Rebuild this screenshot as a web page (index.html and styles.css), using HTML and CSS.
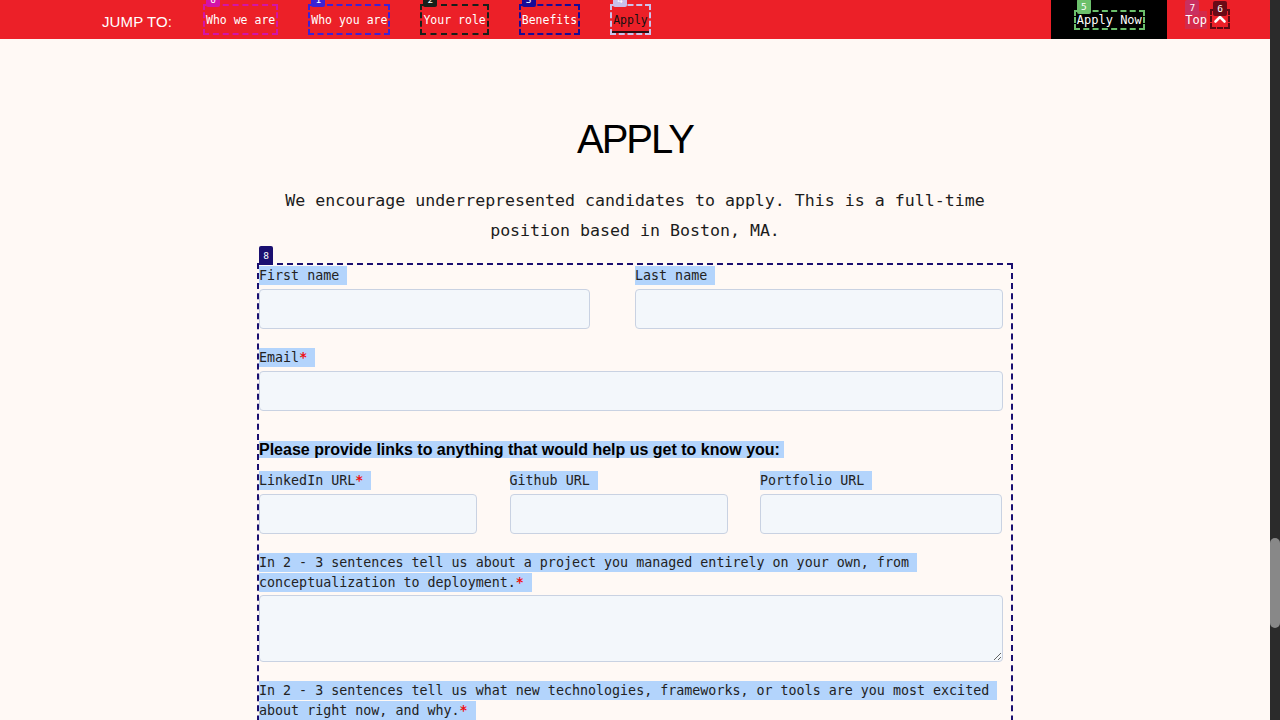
FILE: index.html
```html
<!DOCTYPE html>
<html lang="en">
<head>
<meta charset="utf-8">
<title>Apply</title>
<link rel="stylesheet" href="styles.css">
</head>
<body>
<div class="viewport">
  <div class="page">
    <nav class="topnav">
      <span class="jump">JUMP TO:</span>
      <ul class="links">
        <li class="tag t0"><a class="navlink" href="#who">Who we are</a><span class="badge b0">0</span></li>
        <li class="tag t1"><a class="navlink" href="#you">Who you are</a><span class="badge b1">1</span></li>
        <li class="tag t2"><a class="navlink" href="#role">Your role</a><span class="badge b2">2</span></li>
        <li class="tag t3"><a class="navlink" href="#benefits">Benefits</a><span class="badge b3">3</span></li>
        <li class="tag t4"><a class="navlink active" href="#apply">Apply</a><span class="badge b4">4</span></li>
      </ul>
      <div class="applynow">
        <span class="tag t5"><a class="navlink" href="#apply">Apply Now</a><span class="badge b5 clamp">5</span></span>
      </div>
      <div class="toplinks">
        <span class="tag t7"><a class="navlink toplink" href="#top">Top</a><span class="badge b7 clamp">7</span></span>
        <span class="tag t6"><a class="chev" href="#top" aria-label="Back to top"><svg width="14" height="14" viewBox="0 0 14 14"><polyline points="2.5,9.5 7,5 11.5,9.5" fill="none" stroke="#fff" stroke-width="2.6" stroke-linecap="round" stroke-linejoin="round"/></svg></a><span class="badge b6 clamp">6</span></span>
      </div>
    </nav>

    <main class="content">
      <h1 class="title">APPLY</h1>
      <p class="intro">We encourage underrepresented candidates to apply. This is a full-time position based in Boston, MA.</p>

      <div class="formwrap">
        <span class="badge b8">8</span>
        <form class="form">
          <div class="row two">
            <div class="field">
              <label class="lbl"><span class="sel">First name&nbsp;</span></label>
              <input class="inp" type="text">
            </div>
            <div class="field">
              <label class="lbl"><span class="sel">Last name&nbsp;</span></label>
              <input class="inp" type="text">
            </div>
          </div>

          <div class="field">
            <label class="lbl"><span class="sel">Email<span class="req">*</span>&nbsp;</span></label>
            <input class="inp" type="email">
          </div>

          <h3 class="section"><span class="sel">Please provide links to anything that would help us get to know you:&nbsp;</span></h3>

          <div class="row three">
            <div class="field">
              <label class="lbl"><span class="sel">LinkedIn URL<span class="req">*</span>&nbsp;</span></label>
              <input class="inp" type="url">
            </div>
            <div class="field">
              <label class="lbl"><span class="sel">Github URL&nbsp;</span></label>
              <input class="inp" type="url">
            </div>
            <div class="field">
              <label class="lbl"><span class="sel">Portfolio URL&nbsp;</span></label>
              <input class="inp" type="url">
            </div>
          </div>

          <div class="field">
            <label class="lbl wide"><span class="sel">In 2 - 3 sentences tell us about a project you managed entirely on your own, from&nbsp; conceptualization to deployment.<span class="req">*</span>&nbsp;</span></label>
            <textarea class="inp area"></textarea>
          </div>

          <div class="field">
            <label class="lbl wide"><span class="sel">In 2 - 3 sentences tell us what new technologies, frameworks, or tools are you most excited&nbsp; about right now, and why.<span class="req">*</span>&nbsp;</span></label>
            <textarea class="inp area"></textarea>
          </div>
        </form>
      </div>
    </main>
  </div>
  <div class="scrollbar"><div class="thumb"></div></div>
</div>
</body>
</html>
```

FILE: styles.css
```css
* { box-sizing: border-box; }

html, body {
  margin: 0;
  padding: 0;
  height: 720px;
  overflow: hidden;
}

body {
  background: #fff9f5;
  color: #1f1f1f;
  font-family: "DejaVu Sans Mono", "Liberation Mono", monospace;
}

.viewport {
  display: flex;
  height: 720px;
}

.page {
  flex: 1;
  min-width: 0;
  overflow: hidden;
}

/* ---------- scrollbar ---------- */
.scrollbar {
  width: 10px;
  background: #2b2b2b;
  padding-top: 538px;
}
.thumb {
  height: 90px;
  background: #888888;
  border-radius: 5px;
}

/* ---------- top nav ---------- */
.topnav {
  height: 39px;
  background: #ec2028;
  display: flex;
  align-items: center;
  padding-left: 102px;
  padding-right: 42px;
}

.jump {
  font-family: "Liberation Sans", Arial, sans-serif;
  font-size: 15px;
  color: #fff;
  margin-top: 3px;
  margin-right: 33px;
  letter-spacing: 0.1px;
}

.links {
  list-style: none;
  margin: 0;
  padding: 0;
  display: flex;
  gap: 34px;
  flex: 1;
  align-self: stretch;
  align-items: center;
}

.tag {
  position: relative;
  display: inline-block;
}

.navlink {
  display: inline-block;
  color: #fff;
  text-decoration: none;
  font-size: 11.5px;
  line-height: 14px;
  padding: 7px 1px 6px;
}

.t0 .navlink { outline: 2px dashed #d313a8; }
.t1 .navlink { outline: 2px dashed #3b22d6; }
.t2 .navlink { outline: 2px dashed #17201a; }
.t3 .navlink { outline: 2px dashed #160a98; }
.t4 .navlink { outline: 2px dashed #cdc2ea; }

.navlink.active {
  color: #111;
  padding-bottom: 4px;
  border-bottom: 2px solid #2a0d10;
}

.badge {
  position: absolute;
  left: 1px;
  top: -14px;
  min-width: 14px;
  height: 15px;
  padding: 0 3px;
  font-size: 9.5px;
  line-height: 15px;
  color: #fff;
  text-align: center;
  border-radius: 2px;
}
.b0 { background: #d313a8; }
.b1 { background: #3b22d6; }
.b2 { background: #17201a; }
.b3 { background: #160a98; }
.b4 { background: #c9c0ea; }
.b5 { background: #6cc06c; }
.b6 { background: #6a0a16; }
.b7 { background: #c93060; }

.applynow {
  align-self: stretch;
  background: #000;
  width: 116px;
  display: flex;
  align-items: center;
  justify-content: center;
  padding-bottom: 2px;
}
.t5 .navlink {
  padding: 0 1px;
  line-height: 16px;
  font-size: 12px;
  outline: 2px dashed #6cc06c;
}
.clamp { top: -10px; }

.toplinks {
  display: flex;
  align-items: center;
  gap: 5px;
  margin-left: 18px;
  align-self: stretch;
  padding-bottom: 2px;
}
.toplink {
  padding: 2px 0;
  background: #d42a4a;
  line-height: 14px;
  font-size: 12px;
}
.t7 .clamp { top: -9px; left: 0; }

.chev {
  display: flex;
  width: 16px;
  height: 16px;
  align-items: center;
  justify-content: center;
  outline: 2px dashed #5c0a12;
}
.t6 .clamp { top: -10px; left: 1px; }

/* ---------- content ---------- */
.content {
  padding-top: 77px;
}

.title {
  margin: 0;
  text-align: center;
  font-family: "Liberation Sans", Arial, sans-serif;
  font-weight: 400;
  font-size: 40px;
  line-height: 46px;
  letter-spacing: -2px;
  color: #000;
}

.intro {
  width: 752px;
  margin: 24px auto 0;
  text-align: center;
  font-size: 16.6px;
  line-height: 30px;
  color: #1c1c1c;
}

.formwrap {
  position: relative;
  width: 752px;
  margin: 19px auto 0;
  outline: 2px dashed #1a0f70;
}
.b8 {
  background: #1a0f70;
  top: -19px;
  left: 0;
  height: 19px;
  line-height: 19px;
  border-radius: 2px 2px 0 0;
}

.form {
  display: flex;
  flex-direction: column;
  gap: 18px;
  padding-bottom: 40px;
}

.row {
  display: grid;
}
.row.two {
  grid-template-columns: 331px 368px;
  column-gap: 45px;
}
.row.three {
  grid-template-columns: 218px 218px 242px;
  column-gap: 32.5px;
}

.field {
  display: flex;
  flex-direction: column;
  gap: 3px;
}

.lbl {
  display: block;
  font-size: 13.33px;
  line-height: 20px;
  padding-top: 1px;
  color: #222;
}

.sel {
  background: #b3d4fc;
  padding: 2.3px 0;
  -webkit-box-decoration-break: clone;
  box-decoration-break: clone;
}

.req {
  color: #ee1111;
  font-weight: 700;
}

.inp {
  display: block;
  width: 744px;
  height: 40px;
  margin: 0;
  background: #f3f7fb;
  border: 1px solid #c9d2e2;
  border-radius: 4px;
  font: inherit;
}
.row .inp { width: 100%; }

.area {
  height: 67px;
  margin-top: -1px;
  resize: vertical;
}

.section {
  margin: 11px 0 -7px;
  font-family: "Liberation Sans", Arial, sans-serif;
  font-weight: 700;
  font-size: 16px;
  line-height: 18px;
  padding-top: 1px;
  color: #000;
}
.section .sel { padding: 0; }
```
